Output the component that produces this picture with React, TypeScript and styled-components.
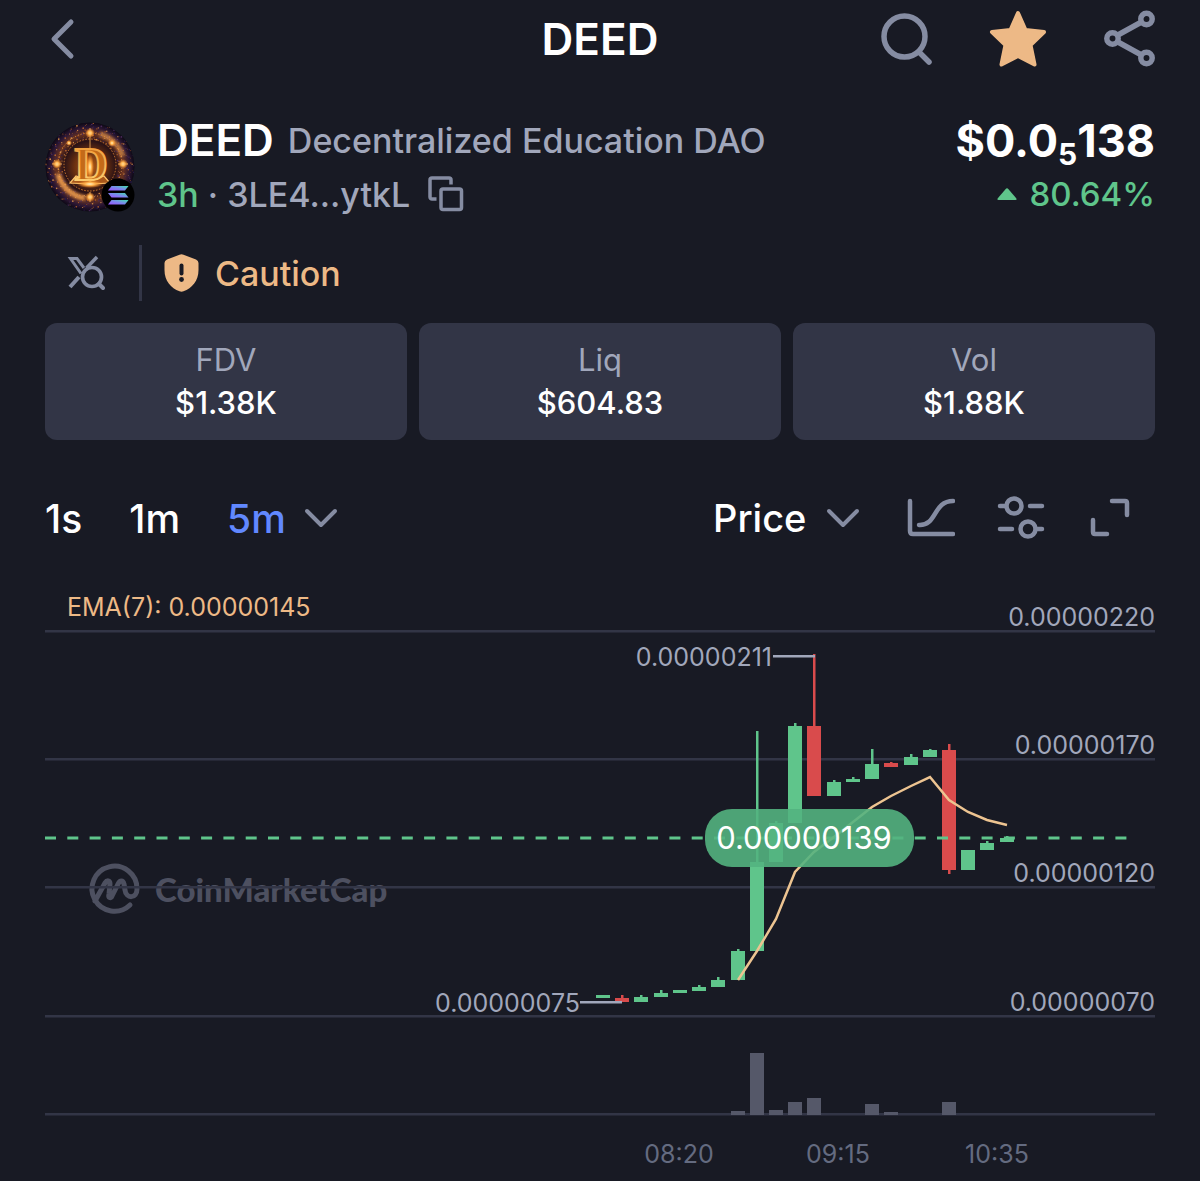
import React, { useState } from 'react';
import styled, { createGlobalStyle } from 'styled-components';

const GlobalStyle = createGlobalStyle`
  * {
    box-sizing: border-box;
  }
  body {
    margin: 0;
    background: #181a24;
    color: #fff;
    font-family: Inter, 'Liberation Sans', sans-serif;
  }
  button,
  select {
    font: inherit;
    color: inherit;
    background: none;
    border: 0;
    padding: 0;
    margin: 0;
    cursor: pointer;
  }
  svg {
    display: block;
  }
`;

const Page = styled.main`
  padding: 0 45px;
  overflow: hidden;
`;

const Header = styled.header`
  display: grid;
  grid-template-columns: 1fr auto 1fr;
  align-items: center;
  height: 78px;
  color: #858ca2;
  h1 {
    margin: 0;
    color: #fff;
    font-size: 44px;
    line-height: 48px;
    font-weight: 600;
  }
`;

const HeaderActions = styled.div`
  display: flex;
  justify-content: flex-end;
  align-items: center;
  gap: 56px;
`;

const IconButton = styled.button<{ $color?: string }>`
  display: flex;
  align-items: center;
  color: ${({ $color }) => $color || '#858ca2'};
`;

const TokenRow = styled.section`
  display: flex;
  align-items: center;
  gap: 22px;
  margin-top: 35px;
`;

const TokenInfo = styled.div`
  flex: 1;
`;

const TokenPrice = styled.div`
  text-align: right;
`;

const Line = styled.div<{ $end?: boolean }>`
  display: flex;
  align-items: center;
  justify-content: ${({ $end }) => ($end ? 'flex-end' : 'flex-start')};
  height: 54px;
  white-space: nowrap;
`;

const Symbol = styled.strong`
  font-size: 44px;
  font-weight: 600;
  margin-right: 14px;
`;

const Muted = styled.span`
  color: #a1a7bb;
  font-size: 34px;
  font-weight: 500;
`;

const Age = styled(Muted)`
  color: #5fc58b;
`;

const Change = styled(Age)`
  margin-left: 12px;
  font-size: 33px;
`;

const Price = styled.strong`
  font-size: 45px;
  font-weight: 700;
  sub {
    font-size: 30px;
    line-height: 0;
    vertical-align: -8px;
  }
`;

const CopyButton = styled(IconButton)`
  margin-left: 18px;
`;

const Alerts = styled.section`
  display: flex;
  align-items: center;
  height: 56px;
  margin-top: 24px;
  padding-left: 22px;
`;

const Divider = styled.span`
  width: 3px;
  height: 56px;
  margin: 0 22px 0 34px;
  background: #323546;
`;

const Caution = styled.button`
  display: flex;
  align-items: center;
  gap: 16px;
  color: #edb986;
  font-size: 34px;
  font-weight: 500;
`;

const Stats = styled.dl`
  display: grid;
  grid-template-columns: repeat(3, 1fr);
  gap: 12px;
  margin: 22px 0 0;
`;

const Stat = styled.div`
  display: flex;
  flex-direction: column;
  align-items: center;
  padding: 15px 0 16px;
  border-radius: 12px;
  background: #323546;
  font-size: 31px;
  line-height: 43px;
  dt {
    color: #a1a7bb;
  }
  dd {
    margin: 0;
    font-weight: 500;
  }
`;

const Toolbar = styled.nav`
  display: flex;
  align-items: center;
  justify-content: space-between;
  height: 60px;
  margin-top: 48px;
  font-size: 39px;
  font-weight: 500;
`;

const ToolGroup = styled.div<{ $gap: number }>`
  display: flex;
  align-items: center;
  gap: ${({ $gap }) => $gap}px;
`;

const Interval = styled.button<{ $active: boolean }>`
  color: ${({ $active }) => ($active ? '#6188ff' : '#fff')};
`;

const SelectWrap = styled.label`
  display: flex;
  align-items: center;
  gap: 19px;
  padding-right: 5px;
  font-size: 38px;
  color: #858ca2;
  select {
    appearance: none;
    color: #fff;
    outline: none;
  }
`;

const ChartSvg = styled.svg`
  width: 100%;
  height: auto;
  margin-top: 42px;
  font-size: 25px;
  overflow: visible;
`;

const UP = '#5fc58b';
const DOWN = '#d94b4c';
const GRID = '#323546';

const ChevronDown = () => (
  <svg width="34" height="20" viewBox="0 0 34 20" fill="none" stroke="#858ca2" strokeWidth="4" strokeLinecap="round" strokeLinejoin="round">
    <path d="M3 3L17 17L31 3" />
  </svg>
);

// speckles of the coin artwork
const specks = Array.from({ length: 420 }, (_, i) => {
  const a = i * 2.39996;
  const r = 28 + ((i * 37) % 100) * 0.165;
  return {
    x: 45 + Math.cos(a) * r,
    y: 45 + Math.sin(a) * r,
    s: 0.4 + ((i * 13) % 7) * 0.08,
    c: ['#4b2a5c', '#b0602c', '#2a1c50', '#7d3c22', '#d08a48', '#3a2148'][(i * 7) % 6],
  };
});

const sparks = [
  [45, 11, 4],
  [12, 42, 4],
  [78, 42, 4],
  [45, 75, 4],
  [24, 21, 2],
  [67, 21, 3],
];

const TokenLogo = () => (
  <svg width="90" height="90" viewBox="0 0 90 90" role="img" aria-label="DEED on Solana">
    <defs>
      <radialGradient id="coin">
        <stop offset="0" stopColor="#b35b16" />
        <stop offset="0.35" stopColor="#6a3010" />
        <stop offset="0.58" stopColor="#2a1216" />
        <stop offset="0.74" stopColor="#6a331f" />
        <stop offset="0.88" stopColor="#2b1633" />
        <stop offset="1" stopColor="#0a0712" />
      </radialGradient>
      <radialGradient id="spark">
        <stop offset="0" stopColor="#fff3c4" />
        <stop offset="0.4" stopColor="#ffb04a" />
        <stop offset="1" stopColor="#ff8a20" stopOpacity="0" />
      </radialGradient>
      <linearGradient id="gold" x1="0" y1="0" x2="0" y2="1">
        <stop offset="0" stopColor="#ee9430" />
        <stop offset="1" stopColor="#ffd97c" />
      </linearGradient>
      <linearGradient id="sol" x1="0" y1="1" x2="1" y2="0">
        <stop offset="0" stopColor="#9a52ff" />
        <stop offset="0.5" stopColor="#7c86ee" />
        <stop offset="1" stopColor="#3fe0a8" />
      </linearGradient>
      <clipPath id="disc">
        <circle cx="45" cy="45" r="44.5" />
      </clipPath>
      <filter id="soft" x="-50%" y="-50%" width="200%" height="200%">
        <feGaussianBlur stdDeviation="1.6" />
      </filter>
    </defs>
    <g clipPath="url(#disc)">
      <rect width="90" height="90" fill="url(#coin)" />
      {specks.map((p, i) => (
        <circle key={i} cx={p.x} cy={p.y} r={p.s} fill={p.c} />
      ))}
      <g fill="none" stroke="#f7a552" strokeWidth="5" filter="url(#soft)">
        <path d="M55 12A35 35 0 0 1 78 34" opacity="0.6" />
        <path d="M13 52A33 33 0 0 0 40 76" opacity="0.85" />
      </g>
      <circle cx="45" cy="43" r="32" fill="none" stroke="#e79442" strokeWidth="1" strokeDasharray="1 2" />
      <circle cx="45" cy="43" r="26" fill="none" stroke="#d07a30" strokeWidth="1" strokeDasharray="1.5 1.5" />
      {sparks.map(([x, y, r], i) => (
        <circle key={i} cx={x} cy={y} r={r + 1} fill="url(#spark)" />
      ))}
      <path d="M7 42H17M73 42H83M45 6V27M45 70V80" stroke="#ffb75c" strokeWidth="0.8" />
      <path d="M25 61L31 54L45 59L59 54L65 61L45 62Z" fill="#a8571b" stroke="#ffc36a" strokeWidth="1.2" />
      <text x="46" y="58" textAnchor="middle" fontFamily="Liberation Serif, serif" fontWeight="700" fontSize="46" fill="#c46a18" stroke="url(#gold)" strokeWidth="2">
        D
      </text>
      <ellipse cx="45" cy="45" rx="4" ry="13" fill="url(#spark)" />
      <ellipse cx="45" cy="62" rx="13" ry="4" fill="url(#spark)" />
    </g>
    <circle cx="73" cy="73" r="16.5" fill="#000" />
    <g fill="url(#sol)">
      <path d="M66.5 64H83.5L80 68.5H63Z" />
      <path d="M63 71H80L83.5 75.5H66.5Z" />
      <path d="M66.5 78H83.5L80 82.5H63Z" />
    </g>
  </svg>
);

// [open, close, high, low] on the plot's vertical axis
const candles = [
  [408, 405, 405, 408],
  [408, 412, 405, 412],
  [412, 407, 405, 412],
  [407, 403, 400, 407],
  [403, 400, 400, 403],
  [401, 397, 395, 401],
  [397, 390, 387, 397],
  [390, 361, 359, 390],
  [361, 272, 141, 361],
  [272, 233, 231, 272],
  [233, 136, 133, 233],
  [136, 206, 64, 206],
  [206, 192, 190, 206],
  [192, 189, 187, 192],
  [189, 174, 159, 189],
  [173, 177, 172, 177],
  [175, 167, 164, 175],
  [167, 160, 159, 167],
  [160, 280, 154, 284],
  [280, 260, 260, 280],
  [260, 253, 251, 260],
  [252, 248, 246, 252],
];

const ema = [390, 361, 329, 282, 262, 247, 232, 217, 206, 196, 187, 210, 222, 230, 235];

const volumes: Record<number, number> = { 7: 4, 8: 62, 9: 5, 10: 13, 11: 17, 14: 11, 15: 3, 18: 13 };

const priceLevels = [
  { label: '0.00000220', y: 41 },
  { label: '0.00000170', y: 169 },
  { label: '0.00000120', y: 297 },
  { label: '0.00000070', y: 426 },
];

const times = [
  { label: '08:20', x: 634 },
  { label: '09:15', x: 793 },
  { label: '10:35', x: 952 },
];

const candleX = (i: number) => Math.round(558 + i * 19.22);

function Chart() {
  return (
    <ChartSvg viewBox="0 0 1110 591" role="img" aria-label="DEED price chart">
      <path
        d="M85 315A22.5 22.5 0 1 1 92 299C92 309 81 309 80 300L79 294C78 290 75 290 73 294L67 306C66 309 63 308 64 304L65 294C65 290 62 290 60 293L50 311"
        fill="none"
        stroke="#4d5060"
        strokeWidth="5"
        strokeLinecap="round"
        strokeLinejoin="round"
      />
      <text x="110" y="312" fill="#4d5060" fontFamily="Lato, sans-serif" fontWeight="900" fontSize="33">
        CoinMarketCap
      </text>

      {priceLevels.map(({ label, y }) => (
        <g key={label}>
          <rect y={y - 1} width="1110" height="2.5" fill={GRID} />
          <text x="1110" y={y - 5} textAnchor="end" fill="#a1a7bb">
            {label}
          </text>
        </g>
      ))}
      <rect y="523" width="1110" height="2.5" fill={GRID} />
      <text x="22" y="26" fill="#edb986">
        EMA(7): 0.00000145
      </text>

      {candles.map(([open, close, high, low], i) => {
        const x = candleX(i);
        return (
          <g key={i} fill={close > open ? DOWN : UP}>
            <rect x={x - 1} y={high} width="2.5" height={low - high} />
            <rect x={x - 7} y={Math.min(open, close)} width="14" height={Math.abs(close - open)} />
          </g>
        );
      })}
      {Object.entries(volumes).map(([i, h]) => (
        <rect key={i} x={candleX(Number(i)) - 7} y={525 - h} width="14" height={h} fill="#555869" />
      ))}

      <path d="M0 248H1084" stroke={UP} strokeWidth="3" strokeDasharray="11 11.3" />
      <polyline points={ema.map((y, i) => `${candleX(i + 7)},${y}`).join(' ')} fill="none" stroke="#edc491" strokeWidth="2.5" />

      <g fill="#a1a7bb">
        <text x="727" y="76" textAnchor="end">
          0.00000211
        </text>
        <rect x="728" y="65" width="42" height="2.5" />
        <text x="535" y="422" textAnchor="end">
          0.00000075
        </text>
        <rect x="535" y="411" width="42" height="2.5" />
      </g>

      <rect x="660" y="219" width="209" height="58" rx="27" fill="#53b27f" fillOpacity="0.9" />
      <text x="759" y="259" textAnchor="middle" fill="#fff" fontSize="31">
        0.00000139
      </text>

      {times.map(({ label, x }) => (
        <text key={label} x={x} y="573" textAnchor="middle" fill="#646b80">
          {label}
        </text>
      ))}
    </ChartSvg>
  );
}

export default function App() {
  const [interval, setInterval] = useState('5m');
  const [mode, setMode] = useState('Price');

  return (
    <Page>
      <GlobalStyle />
      <Header>
        <IconButton aria-label="Back">
          <svg width="34" height="46" viewBox="0 0 34 46" fill="none" stroke="currentColor" strokeWidth="5" strokeLinecap="round" strokeLinejoin="round">
            <path d="M26 6L9 23L26 40" />
          </svg>
        </IconButton>
        <h1>DEED</h1>
        <HeaderActions>
          <IconButton aria-label="Search">
            <svg width="54" height="54" viewBox="0 0 54 54" fill="none" stroke="currentColor" strokeWidth="5.5" strokeLinecap="round">
              <circle cx="25.5" cy="24.5" r="20.5" />
              <path d="M41 41L50 50" />
            </svg>
          </IconButton>
          <IconButton aria-label="Remove from watchlist" $color="#edb986">
            <svg width="58" height="58" viewBox="0 0 58 58" fill="currentColor" stroke="currentColor" strokeWidth="4" strokeLinejoin="round">
              <path d="M29 3L36.5 20L55 22L41.5 35L45.5 54.5L29 46L12.5 54.5L16.5 35L3 22L21.5 20Z" />
            </svg>
          </IconButton>
          <IconButton aria-label="Share">
            <svg width="52" height="58" viewBox="0 0 52 58" fill="none" stroke="currentColor" strokeWidth="5.5">
              <circle cx="9.5" cy="28.5" r="5.7" />
              <circle cx="43.5" cy="9" r="5.7" />
              <circle cx="43.5" cy="48" r="5.7" />
              <path d="M14 25.5L38.5 12M14 31.5L38.5 45" />
            </svg>
          </IconButton>
        </HeaderActions>
      </Header>

      <TokenRow>
        <TokenLogo />
        <TokenInfo>
          <Line>
            <Symbol>DEED</Symbol>
            <Muted>Decentralized Education DAO</Muted>
          </Line>
          <Line>
            <Age>3h</Age>
            <Muted>&nbsp;·&nbsp;3LE4...ytkL</Muted>
            <CopyButton aria-label="Copy address">
              <svg width="36" height="36" viewBox="0 0 36 36" fill="none" stroke="currentColor" strokeWidth="3.5" strokeLinejoin="round">
                <rect x="13" y="13" width="20.5" height="20.5" rx="2" />
                <path d="M8.5 23H4A2 2 0 0 1 2 21V4A2 2 0 0 1 4 2H21A2 2 0 0 1 23 4V8.5" />
              </svg>
            </CopyButton>
          </Line>
        </TokenInfo>
        <TokenPrice>
          <Line $end>
            <Price>
              $0.0<sub>5</sub>138
            </Price>
          </Line>
          <Line $end>
            <svg width="20" height="12" viewBox="0 0 20 12" fill={UP}>
              <path d="M1.5 12Q-0.5 12 1 10L8.5 1.2Q10 -0.5 11.5 1.2L19 10Q20.5 12 18.5 12Z" />
            </svg>
            <Change>80.64%</Change>
          </Line>
        </TokenPrice>
      </TokenRow>

      <Alerts>
        <IconButton aria-label="Search on X">
          <svg width="38" height="36" viewBox="0 0 38 36" fill="none" stroke="currentColor" strokeWidth="3">
            <path d="M17 13L10 3.5H3.5L14 18.5" />
            <path d="M30 2L19.5 13" strokeWidth="3.5" />
            <path d="M12 22L3 32" strokeWidth="4" />
            <circle cx="25" cy="22" r="9.5" strokeWidth="3.7" />
            <path d="M32 29L36 33" strokeWidth="4" strokeLinecap="round" />
          </svg>
        </IconButton>
        <Divider />
        <Caution>
          <svg width="35" height="38" viewBox="0 0 35 38">
            <path d="M15.5 0.7Q17.5 -0.2 19.5 0.7L32 5.5Q34.5 6.5 34.5 9V16C34.5 27 28 34 19.5 37.3Q17.5 38 15.5 37.3C7 34 0.5 27 0.5 16V9Q0.5 6.5 3 5.5Z" fill="#edb986" />
            <path d="M17.5 11.5V19.5" stroke="#181a24" strokeWidth="4" strokeLinecap="round" />
            <circle cx="17.5" cy="25.5" r="2.4" fill="#181a24" />
          </svg>
          Caution
        </Caution>
      </Alerts>

      <Stats>
        <Stat>
          <dt>FDV</dt>
          <dd>$1.38K</dd>
        </Stat>
        <Stat>
          <dt>Liq</dt>
          <dd>$604.83</dd>
        </Stat>
        <Stat>
          <dt>Vol</dt>
          <dd>$1.88K</dd>
        </Stat>
      </Stats>

      <Toolbar>
        <ToolGroup $gap={47}>
          {['1s', '1m'].map((item) => (
            <Interval key={item} $active={item === interval} onClick={() => setInterval(item)}>
              {item}
            </Interval>
          ))}
          <ToolGroup $gap={18}>
            <Interval $active={interval === '5m'} onClick={() => setInterval('5m')}>
              5m
            </Interval>
            <IconButton aria-label="More intervals">
              <ChevronDown />
            </IconButton>
          </ToolGroup>
        </ToolGroup>
        <ToolGroup $gap={42}>
          <SelectWrap>
            <select aria-label="Chart value" value={mode} onChange={(e) => setMode(e.target.value)}>
              <option>Price</option>
              <option>Cap</option>
            </select>
            <ChevronDown />
          </SelectWrap>
          <IconButton aria-label="Chart type">
            <svg width="48" height="42" viewBox="7 0 48 42" fill="none" stroke="currentColor" strokeWidth="4.5" strokeLinecap="round" strokeLinejoin="round">
              <path d="M10 4V34Q10 37 13 37H53" />
              <path d="M19 28C37 29 33 4 53 4" />
            </svg>
          </IconButton>
          <IconButton aria-label="Indicators">
            <svg width="48" height="44" viewBox="0 0 48 44" fill="none" stroke="currentColor" strokeWidth="4.5" strokeLinecap="round">
              <circle cx="17" cy="10" r="7.5" />
              <circle cx="31" cy="33" r="7.5" />
              <path d="M3 10H8M33 10H45M3 33H15M40 33H45" />
            </svg>
          </IconButton>
          <IconButton aria-label="Full screen">
            <svg width="68" height="42" viewBox="0 0 68 42" fill="none" stroke="currentColor" strokeWidth="4.5" strokeLinecap="round" strokeLinejoin="round">
              <path d="M25 4H38Q40 4 40 6V18M6 23V35Q6 37 8 37H20" />
            </svg>
          </IconButton>
        </ToolGroup>
      </Toolbar>

      <Chart />
    </Page>
  );
}
